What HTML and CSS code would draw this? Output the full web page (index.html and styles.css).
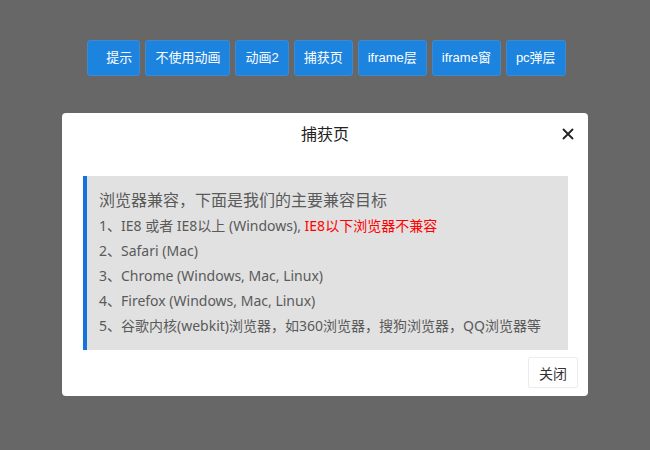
FILE: index.html
```html
<!DOCTYPE html>
<html lang="zh-CN">
<head>
  <meta charset="UTF-8">
  <meta name="viewport" content="width=device-width, initial-scale=1.0">
  <title>捕获页</title>
  <link rel="stylesheet" href="styles.css">
</head>
<body>
  <div class="toolbar">
    <button class="btn btn-first">提示</button>
    <button class="btn">不使用动画</button>
    <button class="btn">动画2</button>
    <button class="btn">捕获页</button>
    <button class="btn">iframe层</button>
    <button class="btn">iframe窗</button>
    <button class="btn">pc弹层</button>
  </div>
  <div class="dialog">
    <div class="dialog-head">
      <span class="dialog-title">捕获页</span>
      <span class="dialog-close">
        <svg width="12" height="12" viewBox="0 0 12 12"><path d="M1 1L11 11M11 1L1 11" stroke="#222" stroke-width="1.8" fill="none"/></svg>
      </span>
    </div>
    <div class="dialog-body">
      <div class="note">
        <p class="note-lead">浏览器兼容，下面是我们的主要兼容目标</p>
        <p>1、IE8 或者 IE8以上 (Windows), <span class="warn">IE8以下浏览器不兼容</span></p>
        <p>2、Safari (Mac)</p>
        <p>3、Chrome (Windows, Mac, Linux)</p>
        <p>4、Firefox (Windows, Mac, Linux)</p>
        <p>5、谷歌内核(webkit)浏览器，如360浏览器，搜狗浏览器，QQ浏览器等</p>
      </div>
    </div>
    <div class="dialog-foot">
      <button class="btn-close">关闭</button>
    </div>
  </div>
</body>
</html>
```

FILE: styles.css
```css
body { margin: 0; background: #676767; font-family: "Liberation Sans", "Noto Sans CJK SC", sans-serif; }
.toolbar { display: flex; justify-content: center; gap: 5px; padding-top: 40px; padding-left: 3px; }
.btn { height: 36px; padding: 0 9px; border: 1px solid #4189cc; border-radius: 3px; background: #1c83df; color: #fff; font-family: inherit; font-size: 13px; line-height: 34px; }
.btn-first { padding: 0 7px 0 18px; }
.dialog { width: 526px; margin: 37px auto 0; background: #fff; border-radius: 4px; }
.dialog-head { position: relative; height: 44px; line-height: 44px; text-align: center; }
.dialog-title { font-size: 16px; color: #222; }
.dialog-close { position: absolute; right: 14px; top: 15px; width: 12px; height: 12px; line-height: 0; }
.dialog-body { padding: 19px 20px 0 21px; }
.note { border-left: 4px solid #1474dc; background: #e1e1e1; padding: 12px; color: #5a5a5a; font-family: "Noto Sans", "Noto Sans CJK SC", sans-serif; font-size: 14px; line-height: 25px; }
.note p { margin: 0; }
.note .note-lead { font-size: 16px; }
.warn { color: #f00; }
.dialog-foot { display: flex; justify-content: flex-end; padding: 7px 10px 8px; }
.btn-close { width: 50px; height: 31px; border: 1px solid #ececec; border-radius: 2px; background: #fff; color: #333; font-family: inherit; font-size: 14px; padding: 0; }
```
